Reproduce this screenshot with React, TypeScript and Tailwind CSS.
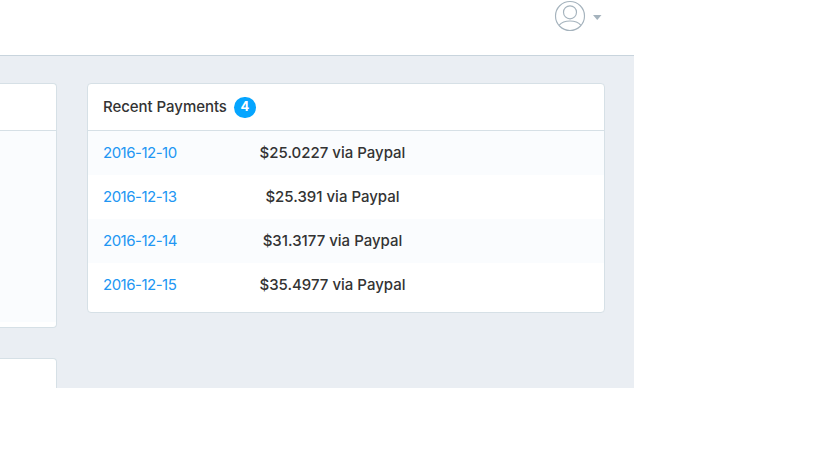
const payments = [
  { date: '2016-12-10', amount: '$25.0227' },
  { date: '2016-12-13', amount: '$25.391' },
  { date: '2016-12-14', amount: '$31.3177' },
  { date: '2016-12-15', amount: '$35.4977' },
];

function UserMenu() {
  return (
    <button className="flex h-8 items-center gap-[7px] text-[#a5b3bd]" aria-label="Account">
      <svg width="32" height="32" viewBox="0 0 32 32" fill="none" stroke="currentColor" strokeWidth="1.15">
        <circle cx="16" cy="16" r="14.5" />
        <circle cx="16" cy="12.300" r="6.500" />
        <path d="M5 25.300C7.500 22.500 11.300 21 16 21s8.500 1.500 11 4.300" />
      </svg>
      <svg width="9" height="5" viewBox="0 0 9 5" fill="currentColor" className="mt-[3px]">
        <path d="M0 0h8.500L4.250 5z" />
      </svg>
    </button>
  );
}

export default function App() {
  return (
    <div className="h-[460px] w-[819px] overflow-hidden bg-white font-['Inter',sans-serif] text-[#333]">
      <div className="flex h-[388px] w-[634px] flex-col overflow-hidden bg-[#eaeef3]">
        <header className="flex h-14 shrink-0 items-start justify-end border-b border-[#c8d4dd] bg-white pr-8">
          <UserMenu />
        </header>
        <main className="flex min-h-0 flex-1 items-start gap-[30px] pt-[27px]">
          <div className="flex w-[57px] shrink-0 flex-col gap-[30px]">
            <section className="h-[245px] rounded-r border border-l-0 border-[#d6e0e6] bg-white">
              <div className="h-[47px] border-b border-[#d6e0e6]" />
              <div className="h-[191px] bg-[#fafcfe]" />
            </section>
            <section className="h-[100px] rounded-tr border border-l-0 border-[#d6e0e6] bg-white" />
          </div>
          <section className="h-[230px] w-[518px] shrink-0 overflow-hidden rounded border border-[#d6e0e6] bg-white">
            <h2 className="flex h-[47px] items-center gap-2 border-b border-[#d6e0e6] pl-[15px] text-[15px] font-medium">
              <span className="w-[123px] whitespace-nowrap tracking-[-0.05px]">Recent Payments</span>
              <span className="flex h-[21px] w-[22px] items-center justify-center rounded-full bg-[#05a5ff] text-[13px] font-bold text-white">4</span>
            </h2>
            <ul>
              {payments.map((p) => (
                <li key={p.date} className="flex h-11 items-center pl-[15px] text-[15px] odd:bg-[#fafcfe]">
                  <a className="w-[129px] whitespace-nowrap tracking-[-0.5px] text-[#2196f3]">{p.date}</a>
                  <span className="w-[201px] whitespace-nowrap text-center font-medium">
                    {p.amount} via Paypal
                  </span>
                </li>
              ))}
            </ul>
          </section>
        </main>
      </div>
    </div>
  );
}
